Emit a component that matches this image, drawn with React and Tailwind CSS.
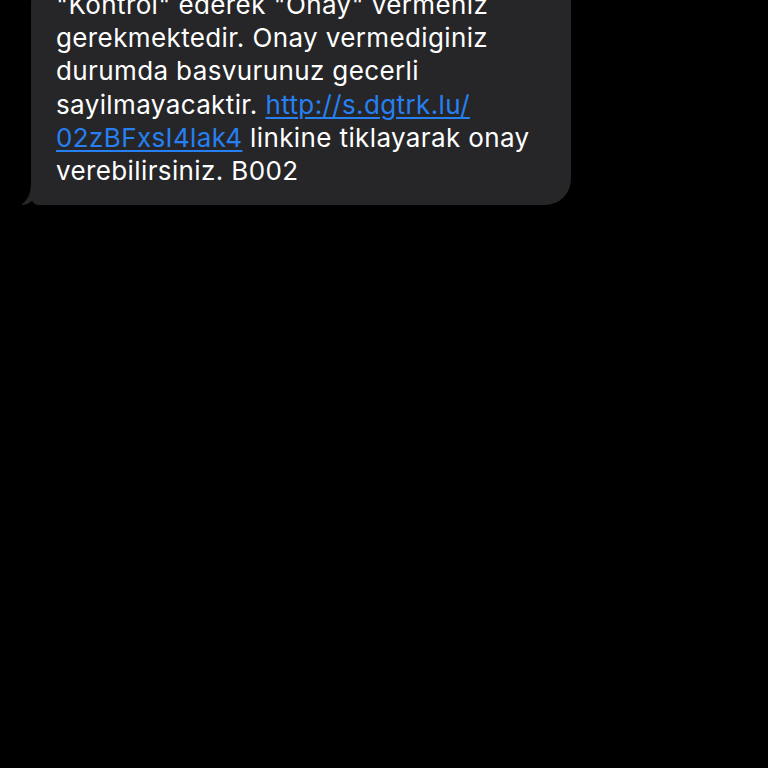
export default function App() {
  return (
    <div className="w-[768px] h-[768px] bg-black overflow-hidden" style={{ fontFamily: 'Inter, "Noto Sans", sans-serif' }}>
      <div className="pl-[31px] mt-[-22px]">
        <div className="relative w-[540px] bg-[#262628] rounded-[26px] rounded-bl-[8px] pl-[25px] pt-[10px] pb-[18px] text-[26px] leading-[33.2px] text-white tracking-[0.38px]">
          <p>
            "Kontrol" ederek "Onay" vermeniz
            <br />
            gerekmektedir. Onay vermediginiz
            <br />
            durumda basvurunuz gecerli
            <br />
            sayilmayacaktir.{' '}
            <a className="text-[#2680f2] underline underline-offset-[3px] decoration-[2px]">http://s.dgtrk.lu/</a>
            <br />
            <a className="text-[#2680f2] underline underline-offset-[3px] decoration-[2px]">02zBFxsI4lak4</a> linkine tiklayarak onay
            <br />
            verebilirsiniz. B002
          </p>
          <svg className="absolute left-[-10px] bottom-0" width="34" height="22" viewBox="0 0 34 22">
            <path d="M10 0 C10 10 7 17 0 22 C5 22 9 20 12 17 C14 16 16 16 18 18 C21 21 25 22 34 22 L34 0 Z" fill="#262628" />
          </svg>
        </div>
      </div>
    </div>
  )
}
